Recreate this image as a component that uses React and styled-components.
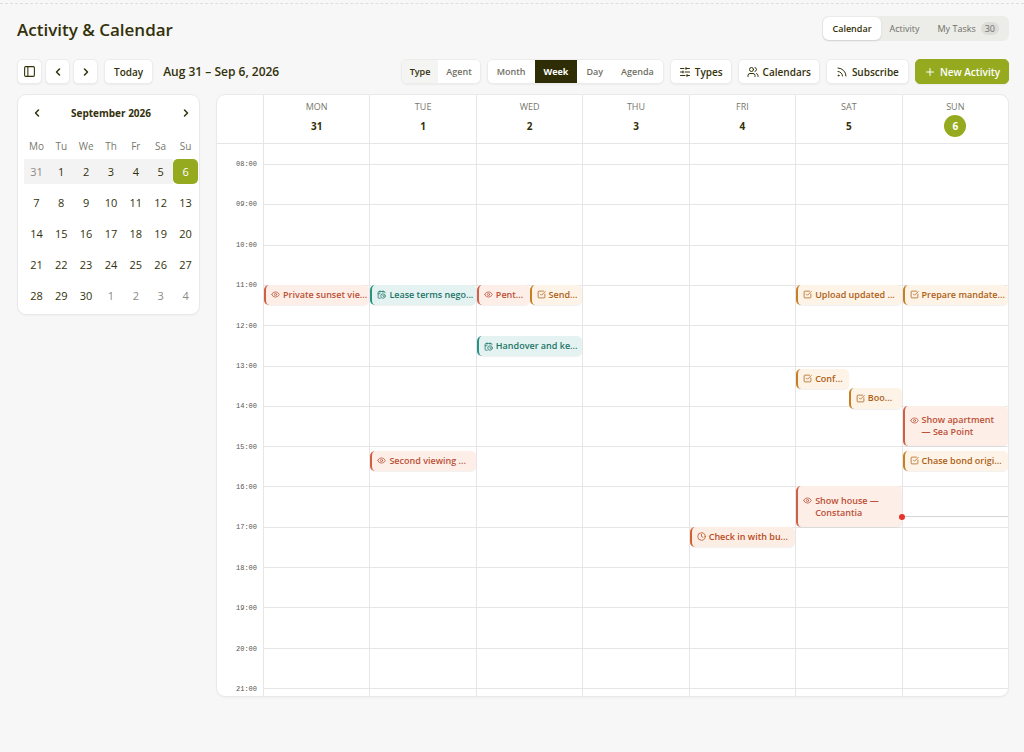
import styled, { createGlobalStyle } from "styled-components";
import {
     CalendarClock,
     ChevronLeft,
     ChevronRight,
     Clock,
     Eye,
     PanelLeft,
     Plus,
     Rss,
     SlidersHorizontal,
     SquareCheckBig,
     Users,
} from "lucide-react";

const GlobalStyle = createGlobalStyle`
     *, *::before, *::after {
          box-sizing: border-box;
     }
     body {
          margin: 0;
          background: #f7f7f7;
          color: #33310a;
          font-family: "Open Sans", "Noto Sans", sans-serif;
          font-size: 11px;
          line-height: 16px;
     }
     button {
          font: inherit;
          color: inherit;
          cursor: pointer;
     }
     h1, h2, h3, p {
          margin: 0;
     }
`;

const Page = styled.div`
     border-top: 1px dashed #dedede;
     margin-top: 3px;
     padding: 12px 15px 56px 17px;
     display: flex;
     flex-direction: column;
`;

const PageHeader = styled.header`
     display: flex;
     align-items: flex-end;
     justify-content: space-between;
     height: 25px;
     margin-bottom: 18px;
`;

const Title = styled.h1`
     font-size: 17px;
     line-height: 22px;
     font-weight: 600;
`;

const Tabs = styled.div`
     display: flex;
     height: 25px;
     padding: 1px;
     border-radius: 6px;
     background: #ecece9;
`;

const Tab = styled.button`
     display: flex;
     align-items: center;
     gap: 5px;
     padding: 0 9px;
     border: 0;
     border-radius: 6px;
     font-size: 9px;
     font-weight: ${(props) => (props.$active ? 600 : 500)};
     color: ${(props) => (props.$active ? "#33310a" : "#6f6f66")};
     background: ${(props) => (props.$active ? "#fff" : "transparent")};
     box-shadow: ${(props) => (props.$active ? "0 1px 2px rgba(0, 0, 0, 0.12)" : "none")};
`;

const Count = styled.span`
     padding: 0 4px;
     border-radius: 7px;
     line-height: 13px;
     background: #dcdcd9;
`;

const Toolbar = styled.div`
     display: flex;
     align-items: center;
     gap: 6px;
     margin-bottom: 10px;
`;

const Button = styled.button`
     display: flex;
     align-items: center;
     justify-content: center;
     gap: 4px;
     height: 25px;
     padding: 0 ${(props) => (props.$wide ? "9px" : "8px")};
     border: 1px solid ${(props) => (props.$primary ? "#96aa20" : "#ececec")};
     border-radius: 5px;
     font-size: 10px;
     font-weight: 600;
     white-space: nowrap;
     color: ${(props) => (props.$primary ? "#fff" : "#33310a")};
     background: ${(props) => (props.$primary ? "#96aa20" : "#fff")};
     box-shadow: 0 1px 2px rgba(0, 0, 0, 0.05);
`;

const IconGroup = styled.div`
     display: flex;
     gap: 3px;
`;

const IconButton = styled(Button)`
     width: 25px;
     padding: 0;
`;

const RangeTitle = styled.h2`
     flex: 1;
     margin-left: 4px;
     font-size: 12px;
     line-height: 16px;
     font-weight: 600;
     white-space: nowrap;
`;

const Segments = styled.div`
     display: flex;
     height: 25px;
     border: 1px solid #ececec;
     border-radius: 6px;
     background: #fff;
     overflow: hidden;
     box-shadow: 0 1px 2px rgba(0, 0, 0, 0.05);

     button {
          padding: 0 ${(props) => (props.$compact ? "8px" : "9px")};
     }
`;

const segmentLook = {
     idle: { color: "#6f6f66", background: "#fff" },
     soft: { color: "#33310a", background: "#f4f4f3" },
     dark: { color: "#fff", background: "#2f2d05" },
};

const Segment = styled.button`
     border: 0;
     font-size: 9px;
     font-weight: ${(props) => (props.$look === "dark" ? 700 : 600)};
     color: ${(props) => segmentLook[props.$look].color};
     background: ${(props) => segmentLook[props.$look].background};
`;

const Content = styled.main`
     display: grid;
     grid-template-columns: 183px minmax(0, 1fr);
     align-items: start;
     gap: 16px;
`;

const Card = styled.section`
     border: 1px solid #e9e9e9;
     border-radius: 9px;
     background: #fff;
     overflow: hidden;
     box-shadow: 0 1px 2px rgba(0, 0, 0, 0.03);
`;

const MiniCard = styled(Card)`
     padding: 5px 1px 6px 6px;
`;

const MiniHeader = styled.div`
     display: flex;
     align-items: center;
     justify-content: space-between;
     height: 25px;
     margin-bottom: 13px;
`;

const MiniTitle = styled.h3`
     font-size: 10px;
     font-weight: 700;
`;

const GhostButton = styled.button`
     display: grid;
     place-items: center;
     width: 25px;
     height: 25px;
     padding: 0;
     border: 0;
     background: transparent;
`;

const MiniTable = styled.table`
     width: 100%;
     table-layout: fixed;
     border-collapse: collapse;

     th {
          height: 16px;
          padding: 0;
          font-size: 10px;
          font-weight: 400;
          color: #77776d;
     }
     td {
          padding: 6px 0 0;
     }
     tbody tr:first-child td {
          padding-top: 5px;
     }
`;

const DayButton = styled.button`
     display: block;
     width: 100%;
     height: 25px;
     padding: 0;
     border: 0;
     border-radius: ${(props) => (props.$today ? "5px" : "0")};
     color: ${(props) => (props.$today ? "#fff" : props.$outside ? "#8b8b84" : "#33310a")};
     background: ${(props) => (props.$today ? "#96aa20" : props.$inRange ? "#f3f3f3" : "transparent")};
`;

const WeekHead = styled.div`
     display: grid;
     grid-template-columns: 46px repeat(7, minmax(0, 1fr));
     height: 49px;
     border-bottom: 1px solid #e6e6e6;
`;

const DayHead = styled.div`
     display: flex;
     flex-direction: column;
     align-items: center;
     padding-top: 4px;
     border-left: 1px solid #e6e6e6;
`;

const DayName = styled.span`
     font-size: 9px;
     line-height: 16px;
     font-weight: 500;
     color: #77776d;
`;

const DayNumber = styled.span`
     width: 22px;
     height: 22px;
     border-radius: 50%;
     font-size: 10px;
     line-height: 22px;
     font-weight: 700;
     text-align: center;
     color: ${(props) => (props.$today ? "#fff" : "inherit")};
     background: ${(props) => (props.$today ? "#96aa20" : "transparent")};
`;

const WeekBody = styled.div`
     display: grid;
     grid-template-columns: 46px repeat(7, minmax(0, 1fr));
`;

const Column = styled.div`
     padding: 20px 0 7px;
     border-left: 1px solid ${(props) => (props.$gutter ? "transparent" : "#e6e6e6")};
     margin-left: ${(props) => (props.$gutter ? "-1px" : "0")};
`;

const Hours = styled.div`
     position: relative;
     display: grid;
     grid-template-rows: repeat(13, minmax(0, 1fr));
     height: 525px;
     border-bottom: ${(props) => (props.$plain ? "0" : "1px solid #e6e6e6")};
`;

const Slot = styled.div`
     border-top: 1px solid #e6e6e6;
`;

const HourLabel = styled.time`
     display: block;
     height: 0;
     padding-right: 6px;
     font-family: "Liberation Mono", monospace;
     font-size: 7px;
     line-height: 0;
     text-align: right;
     color: #55554f;
`;

const eventTone = {
     viewing: { bar: "#cf5f45", background: "#fdeee8", color: "#bb5136" },
     meeting: { bar: "#2a9285", background: "#e4f3f1", color: "#1d7469" },
     task: { bar: "#c77f22", background: "#fdf3e6", color: "#ad5f17" },
     call: { bar: "#d0622f", background: "#fdeee5", color: "#b84a1c" },
};

const EventCard = styled.a`
     position: absolute;
     left: ${(props) => (props.$side === "right" ? "50%" : "0")};
     right: ${(props) => (props.$side === "left" ? "50%" : "0")};
     display: flex;
     align-items: center;
     gap: 3px;
     padding: 0 ${(props) => (props.$tall ? "8px" : "0")} 0 5px;
     border-left: 2px solid ${(props) => eventTone[props.$tone].bar};
     border-radius: 5px;
     font-size: 9px;
     line-height: 12px;
     font-weight: 600;
     text-decoration: none;
     color: ${(props) => eventTone[props.$tone].color};
     background: ${(props) => eventTone[props.$tone].background};
     box-shadow: 0 1px 1px rgba(0, 0, 0, 0.06);

     svg {
          flex: none;
          align-self: ${(props) => (props.$tall ? "flex-start" : "center")};
          margin-top: ${(props) => (props.$tall ? "10px" : "0")};
     }
     span {
          white-space: ${(props) => (props.$tall ? "normal" : "nowrap")};
     }
`;

const NowLine = styled.div`
     position: absolute;
     left: 0;
     right: 0;
     border-top: 1px solid #d5d5d5;

     &::before {
          content: "";
          position: absolute;
          top: -3px;
          left: -4px;
          width: 6px;
          height: 6px;
          border-radius: 50%;
          background: #e5322d;
     }
`;

const FIRST_HOUR = 8;
const HOUR_COUNT = 13;

const weekdays = ["Mo", "Tu", "We", "Th", "Fr", "Sa", "Su"];

const monthWeeks = [
     [31, 1, 2, 3, 4, 5, 6],
     [7, 8, 9, 10, 11, 12, 13],
     [14, 15, 16, 17, 18, 19, 20],
     [21, 22, 23, 24, 25, 26, 27],
     [28, 29, 30, 1, 2, 3, 4],
];

const toneIcons = { viewing: Eye, meeting: CalendarClock, task: SquareCheckBig, call: Clock };

const days = [
     { name: "MON", date: 31, events: [{ title: "Private sunset vie...", start: "11:00", tone: "viewing" }] },
     {
          name: "TUE",
          date: 1,
          events: [
               { title: "Lease terms nego...", start: "11:00", tone: "meeting" },
               { title: "Second viewing ...", start: "15:07", tone: "viewing" },
          ],
     },
     {
          name: "WED",
          date: 2,
          events: [
               { title: "Pent...", start: "11:00", tone: "viewing", side: "left" },
               { title: "Send...", start: "11:00", tone: "task", side: "right" },
               { title: "Handover and ke...", start: "12:16", tone: "meeting" },
          ],
     },
     { name: "THU", date: 3, events: [] },
     { name: "FRI", date: 4, events: [{ title: "Check in with bu...", start: "17:00", tone: "call" }] },
     {
          name: "SAT",
          date: 5,
          events: [
               { title: "Upload updated ...", start: "11:00", tone: "task" },
               { title: "Conf...", start: "13:05", tone: "task", side: "left" },
               { title: "Boo...", start: "13:34", tone: "task", side: "right" },
               { title: "Show house — Constantia", start: "16:00", minutes: 60, tone: "viewing" },
          ],
     },
     {
          name: "SUN",
          date: 6,
          today: true,
          events: [
               { title: "Prepare mandate...", start: "11:00", tone: "task" },
               { title: "Show apartment — Sea Point", start: "14:00", minutes: 60, tone: "viewing" },
               { title: "Chase bond origi...", start: "15:07", tone: "task" },
          ],
     },
];

const spanPercent = (minutes) => `${(minutes / (HOUR_COUNT * 60)) * 100}%`;

const timePercent = (time) => {
     const [hour, minute] = time.split(":").map(Number);
     return spanPercent((hour - FIRST_HOUR) * 60 + minute);
};

const CalendarEvent = ({ title, start, minutes = 30, tone, side }) => {
     const Icon = toneIcons[tone];
     return (
          <EventCard
               href="#"
               $tone={tone}
               $side={side}
               $tall={minutes > 30}
               style={{ top: timePercent(start), height: spanPercent(minutes) }}
          >
               <Icon size={9} />
               <span>{title}</span>
          </EventCard>
     );
};

const MiniCalendar = () => {
     return (
          <MiniCard>
               <MiniHeader>
                    <GhostButton aria-label="Previous month">
                         <ChevronLeft size={12} strokeWidth={3} />
                    </GhostButton>
                    <MiniTitle>September 2026</MiniTitle>
                    <GhostButton aria-label="Next month">
                         <ChevronRight size={12} strokeWidth={3} />
                    </GhostButton>
               </MiniHeader>
               <MiniTable>
                    <thead>
                         <tr>
                              {weekdays.map((day) => (
                                   <th key={day} scope="col">
                                        {day}
                                   </th>
                              ))}
                         </tr>
                    </thead>
                    <tbody>
                         {monthWeeks.map((week, row) => (
                              <tr key={row}>
                                   {week.map((day) => (
                                        <td key={day}>
                                             <DayButton
                                                  $today={row === 0 && day === 6}
                                                  $inRange={row === 0}
                                                  $outside={(row === 0 && day > 7) || (row === 4 && day < 7)}
                                             >
                                                  {day}
                                             </DayButton>
                                        </td>
                                   ))}
                              </tr>
                         ))}
                    </tbody>
               </MiniTable>
          </MiniCard>
     );
};

const WeekCalendar = () => {
     const hours = Array.from({ length: HOUR_COUNT }, (_, i) => FIRST_HOUR + i);
     return (
          <Card>
               <WeekHead>
                    <span />
                    {days.map((day) => (
                         <DayHead key={day.name}>
                              <DayName>{day.name}</DayName>
                              <DayNumber $today={day.today}>{day.date}</DayNumber>
                         </DayHead>
                    ))}
               </WeekHead>
               <WeekBody>
                    <Column $gutter>
                         <Hours $plain>
                              {hours.map((hour) => (
                                   <HourLabel key={hour}>{String(hour).padStart(2, "0")}:00</HourLabel>
                              ))}
                         </Hours>
                         <HourLabel>21:00</HourLabel>
                    </Column>
                    {days.map((day) => (
                         <Column key={day.name}>
                              <Hours>
                                   {hours.map((hour) => (
                                        <Slot key={hour} />
                                   ))}
                                   {day.events.map((event) => (
                                        <CalendarEvent key={event.title} {...event} />
                                   ))}
                                   {day.today && <NowLine style={{ top: timePercent("16:44") }} />}
                              </Hours>
                         </Column>
                    ))}
               </WeekBody>
          </Card>
     );
};

const App = () => {
     return (
          <>
               <GlobalStyle />
               <Page>
                    <PageHeader>
                         <Title>Activity &amp; Calendar</Title>
                         <Tabs>
                              <Tab $active>Calendar</Tab>
                              <Tab>Activity</Tab>
                              <Tab>
                                   My Tasks <Count>30</Count>
                              </Tab>
                         </Tabs>
                    </PageHeader>
                    <Toolbar>
                         <IconGroup>
                              <IconButton aria-label="Toggle sidebar">
                                   <PanelLeft size={13} />
                              </IconButton>
                              <IconButton aria-label="Previous week">
                                   <ChevronLeft size={12} strokeWidth={3} />
                              </IconButton>
                              <IconButton aria-label="Next week">
                                   <ChevronRight size={12} strokeWidth={3} />
                              </IconButton>
                         </IconGroup>
                         <Button $wide>Today</Button>
                         <RangeTitle>Aug 31 – Sep 6, 2026</RangeTitle>
                         <Segments $compact>
                              <Segment $look="soft">Type</Segment>
                              <Segment $look="idle">Agent</Segment>
                         </Segments>
                         <Segments>
                              <Segment $look="idle">Month</Segment>
                              <Segment $look="dark">Week</Segment>
                              <Segment $look="idle">Day</Segment>
                              <Segment $look="idle">Agenda</Segment>
                         </Segments>
                         <Button>
                              <SlidersHorizontal size={12} />
                              Types
                         </Button>
                         <Button>
                              <Users size={12} />
                              Calendars
                         </Button>
                         <Button $wide>
                              <Rss size={12} />
                              Subscribe
                         </Button>
                         <Button $primary>
                              <Plus size={12} />
                              New Activity
                         </Button>
                    </Toolbar>
                    <Content>
                         <MiniCalendar />
                         <WeekCalendar />
                    </Content>
               </Page>
          </>
     );
};

export default App;
